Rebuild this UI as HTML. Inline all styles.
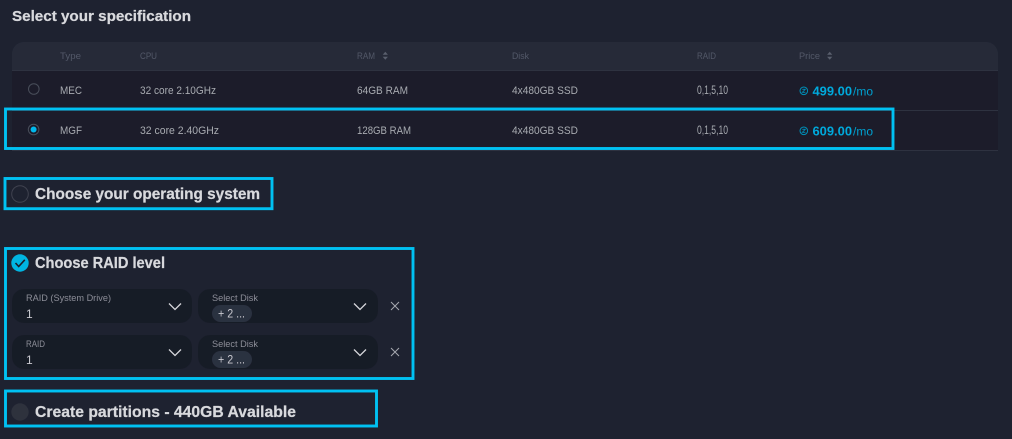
<!DOCTYPE html>
<html lang="en">
<head>
<meta charset="utf-8">
<title>Select your specification</title>
<style>
html,body{margin:0;padding:0;width:1012px;height:439px;overflow:hidden;background:#1e2230}
svg{display:block}
text{font-family:"Liberation Sans","DejaVu Sans",sans-serif}
.h{font-size:15.5px;font-weight:700;fill:#d8d9dd;stroke:#d8d9dd;stroke-width:.25px}
.t{font-size:14.5px}
.th{font-size:9.5px;fill:#535868}
.td{font-size:11px;fill:#a9abb1}
.n{font-size:11.5px}
.lb{font-size:9.5px;fill:#8b8e97}
.v{font-size:12px;fill:#c9cad0}
.p{font-size:13px;font-weight:700;fill:#00a9dc}
.m{font-size:12px;fill:#00a0d0}
.box{fill:none;stroke:#00c1f2;stroke-width:2.9}
</style>
</head>
<body>
<svg width="1012" height="439" viewBox="0 0 1012 439" xmlns="http://www.w3.org/2000/svg">
<defs><filter id="b" x="-2%" y="-2%" width="104%" height="104%"><feGaussianBlur stdDeviation="0.35"/></filter></defs>
<rect width="1012" height="439" fill="#1e2230"/>
<g filter="url(#b)">
<text class="h t" x="12" y="21" textLength="179" lengthAdjust="spacingAndGlyphs">Select your specification</text>

<path d="M12 71V54a12 12 0 0 1 12-12H986a12 12 0 0 1 12 12V71Z" fill="#262b39"/>
<rect x="12" y="71" width="986" height="39.500" fill="#1a1d2a"/>
<rect x="12" y="111" width="986" height="39" fill="#1a1d2a"/>
<rect x="12" y="70" width="986" height="1" fill="#2d3240"/>
<rect x="12" y="110" width="986" height="1" fill="#2d3240"/>
<rect x="12" y="150" width="986" height="1" fill="#2d3240"/>

<text class="th" x="60" y="59" textLength="21" lengthAdjust="spacingAndGlyphs">Type</text>
<text class="th" x="140" y="59" textLength="17" lengthAdjust="spacingAndGlyphs">CPU</text>
<text class="th" x="357" y="59" textLength="18" lengthAdjust="spacingAndGlyphs">RAM</text>
<path d="M382.700 54.800 385.300 51.800 387.900 54.800ZM382.700 56.800 385.300 59.800 387.900 56.800Z" fill="#5a5f6d"/>
<text class="th" x="512" y="59" textLength="17" lengthAdjust="spacingAndGlyphs">Disk</text>
<text class="th" x="697" y="59" textLength="19" lengthAdjust="spacingAndGlyphs">RAID</text>
<text class="th" x="799" y="59" textLength="21" lengthAdjust="spacingAndGlyphs">Price</text>
<path d="M827.100 54.800 829.700 51.800 832.300 54.800ZM827.100 56.800 829.700 59.800 832.300 56.800Z" fill="#5a5f6d"/>

<circle cx="33.800" cy="89" r="5.300" fill="none" stroke="#4a4e5a" stroke-width="1"/>
<text class="td" x="60" y="94" textLength="22" lengthAdjust="spacingAndGlyphs">MEC</text>
<text class="td" x="140" y="94" textLength="76" lengthAdjust="spacingAndGlyphs">32 core 2.10GHz</text>
<text class="td" x="357" y="94" textLength="51" lengthAdjust="spacingAndGlyphs">64GB RAM</text>
<text class="td" x="512" y="94" textLength="66" lengthAdjust="spacingAndGlyphs">4x480GB SSD</text>
<text class="td n" x="697" y="94" textLength="31" lengthAdjust="spacingAndGlyphs">0,1,5,10</text>
<circle cx="803.800" cy="90.800" r="3.800" fill="none" stroke="#008fb8" stroke-width="1"/>
<path d="M802.300 89.300h3l-3 3h3" fill="none" stroke="#008fb8" stroke-width=".8"/>
<text class="p" x="812.500" y="95.500" textLength="39.500" lengthAdjust="spacingAndGlyphs">499.00</text>
<text class="m" x="853" y="95.500" textLength="20" lengthAdjust="spacingAndGlyphs">/mo</text>

<circle cx="33.600" cy="129.500" r="5.300" fill="none" stroke="#4a4e5a" stroke-width="1"/>
<circle cx="33.600" cy="129.500" r="3" fill="#00b8ec"/>
<text class="td" x="60" y="134" textLength="22" lengthAdjust="spacingAndGlyphs">MGF</text>
<text class="td" x="140" y="134" textLength="79" lengthAdjust="spacingAndGlyphs">32 core 2.40GHz</text>
<text class="td" x="357" y="134" textLength="54" lengthAdjust="spacingAndGlyphs">128GB RAM</text>
<text class="td" x="512" y="134" textLength="66" lengthAdjust="spacingAndGlyphs">4x480GB SSD</text>
<text class="td n" x="697" y="134" textLength="31" lengthAdjust="spacingAndGlyphs">0,1,5,10</text>
<circle cx="803.800" cy="130.800" r="3.800" fill="none" stroke="#008fb8" stroke-width="1"/>
<path d="M802.300 129.300h3l-3 3h3" fill="none" stroke="#008fb8" stroke-width=".8"/>
<text class="p" x="812.500" y="135.500" textLength="39.500" lengthAdjust="spacingAndGlyphs">609.00</text>
<text class="m" x="853" y="135.500" textLength="20" lengthAdjust="spacingAndGlyphs">/mo</text>

<circle cx="20" cy="194" r="8.300" fill="none" stroke="#3f4350" stroke-width="1"/>
<text class="h" x="35" y="199" textLength="225" lengthAdjust="spacingAndGlyphs">Choose your operating system</text>

<circle cx="20" cy="263" r="8.700" fill="#00b5e2"/>
<path d="M15.500 263 18.700 266.500 24.800 259.800" fill="none" stroke="#1a1d2a" stroke-width="1.600"/>
<text class="h" x="35" y="268" textLength="130" lengthAdjust="spacingAndGlyphs">Choose RAID level</text>

<rect x="12" y="289" width="180" height="34" rx="12" fill="#191c28"/>
<rect x="198" y="289" width="180" height="34" rx="12" fill="#191c28"/>
<rect x="12" y="335" width="180" height="34" rx="12" fill="#191c28"/>
<rect x="198" y="335" width="180" height="34" rx="12" fill="#191c28"/>

<text class="lb" x="26" y="301" textLength="85" lengthAdjust="spacingAndGlyphs">RAID (System Drive)</text>
<text class="v" x="26" y="318">1</text>
<path d="M169 303.500 175 309.500 181 303.500" fill="none" stroke="#d5d6da" stroke-width="1.300"/>
<text class="lb" x="212" y="301" textLength="46" lengthAdjust="spacingAndGlyphs">Select Disk</text>
<rect x="212" y="305" width="40" height="17" rx="8.500" fill="#2c3040"/>
<text class="v" x="218" y="317.500" textLength="27" lengthAdjust="spacingAndGlyphs">+ 2 ...</text>
<path d="M354 303.500 360 309.500 366 303.500" fill="none" stroke="#d5d6da" stroke-width="1.300"/>
<path d="M391 302 399 310M399 302 391 310" fill="none" stroke="#a6a8af" stroke-width="1"/>

<text class="lb" x="26" y="347" textLength="19" lengthAdjust="spacingAndGlyphs">RAID</text>
<text class="v" x="26" y="364">1</text>
<path d="M169 349.500 175 355.500 181 349.500" fill="none" stroke="#d5d6da" stroke-width="1.300"/>
<text class="lb" x="212" y="347" textLength="46" lengthAdjust="spacingAndGlyphs">Select Disk</text>
<rect x="212" y="351" width="40" height="17" rx="8.500" fill="#2c3040"/>
<text class="v" x="218" y="363.500" textLength="27" lengthAdjust="spacingAndGlyphs">+ 2 ...</text>
<path d="M354 349.500 360 355.500 366 349.500" fill="none" stroke="#d5d6da" stroke-width="1.300"/>
<path d="M391 348 399 356M399 348 391 356" fill="none" stroke="#a6a8af" stroke-width="1"/>

<circle cx="20" cy="412" r="8.700" fill="#2d303d"/>
<text class="h" x="35" y="417" textLength="261" lengthAdjust="spacingAndGlyphs">Create partitions - 440GB Available</text>
</g>
<g filter="url(#b)">
<rect class="box" x="5.500" y="109" width="887.500" height="39.500"/>
<rect class="box" x="5" y="178.500" width="267" height="30.200"/>
<rect class="box" x="5.500" y="248.500" width="407.500" height="130"/>
<rect class="box" x="5.500" y="391" width="371" height="35"/>
</g>
</svg>
</body>
</html>
